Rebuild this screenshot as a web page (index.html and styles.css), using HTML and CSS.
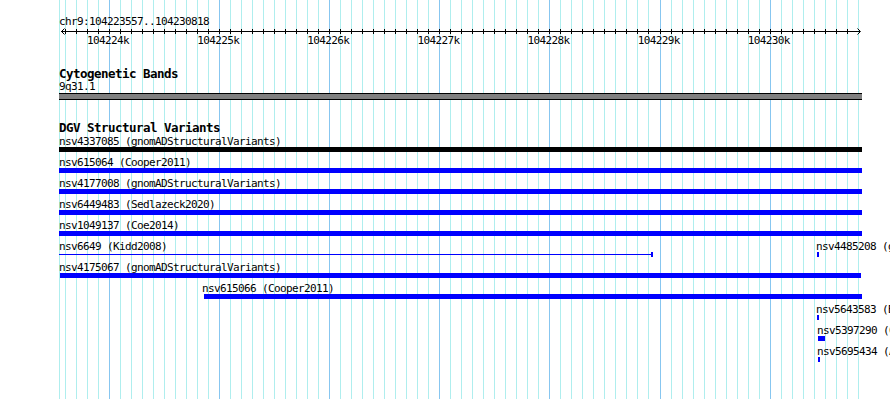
FILE: index.html
```html
<!DOCTYPE html>
<html>
<head>
<meta charset="utf-8">
<title>chr9:104223557..104230818</title>
<link rel="stylesheet" href="styles.css">
</head>
<body>
<div class="browser">
  <svg class="grid-lines" width="890" height="399" viewBox="0 0 890 399" shape-rendering="crispEdges">
    <path class="minor" d="M59.5 0V399M65.5 0V399M76.5 0V399M87.5 0V399M98.5 0V399M120.5 0V399M131.5 0V399M142.5 0V399M153.5 0V399M164.5 0V399M175.5 0V399M186.5 0V399M197.5 0V399M208.5 0V399M230.5 0V399M241.5 0V399M252.5 0V399M263.5 0V399M274.5 0V399M285.5 0V399M296.5 0V399M307.5 0V399M318.5 0V399M340.5 0V399M351.5 0V399M362.5 0V399M373.5 0V399M384.5 0V399M395.5 0V399M406.5 0V399M417.5 0V399M428.5 0V399M450.5 0V399M461.5 0V399M472.5 0V399M483.5 0V399M494.5 0V399M505.5 0V399M516.5 0V399M527.5 0V399M538.5 0V399M560.5 0V399M571.5 0V399M582.5 0V399M593.5 0V399M604.5 0V399M615.5 0V399M626.5 0V399M637.5 0V399M648.5 0V399M671.5 0V399M682.5 0V399M693.5 0V399M704.5 0V399M715.5 0V399M726.5 0V399M737.5 0V399M748.5 0V399M759.5 0V399M781.5 0V399M792.5 0V399M803.5 0V399M814.5 0V399M825.5 0V399M836.5 0V399M847.5 0V399M858.5 0V399"/>
    <path class="major" d="M109.5 0V399M219.5 0V399M329.5 0V399M439.5 0V399M549.5 0V399M660.5 0V399M770.5 0V399"/>
  </svg>

  <div class="tracks">
    <div class="lane locus">chr9:104223557..104230818</div>
    <svg class="scale" width="890" height="8" viewBox="0 0 890 8">
      <path class="axis" shape-rendering="crispEdges" d="M61 4.5H860"/>
      <path class="ticks" shape-rendering="crispEdges" d="M65.5 2v5M76.5 2v5M87.5 2v5M98.5 2v5M109.5 2v5M120.5 2v5M131.5 2v5M142.5 2v5M153.5 2v5M164.5 2v5M175.5 2v5M186.5 2v5M197.5 2v5M208.5 2v5M219.5 2v5M230.5 2v5M241.5 2v5M252.5 2v5M263.5 2v5M274.5 2v5M285.5 2v5M296.5 2v5M307.5 2v5M318.5 2v5M329.5 2v5M340.5 2v5M351.5 2v5M362.5 2v5M373.5 2v5M384.5 2v5M395.5 2v5M406.5 2v5M417.5 2v5M428.5 2v5M439.5 2v5M450.5 2v5M461.5 2v5M472.5 2v5M483.5 2v5M494.5 2v5M505.5 2v5M516.5 2v5M527.5 2v5M538.5 2v5M549.5 2v5M560.5 2v5M571.5 2v5M582.5 2v5M593.5 2v5M604.5 2v5M615.5 2v5M626.5 2v5M637.5 2v5M648.5 2v5M660.5 2v5M671.5 2v5M682.5 2v5M693.5 2v5M704.5 2v5M715.5 2v5M726.5 2v5M737.5 2v5M748.5 2v5M759.5 2v5M770.5 2v5M781.5 2v5M792.5 2v5M803.5 2v5M814.5 2v5M825.5 2v5M836.5 2v5M847.5 2v5"/>
      <polyline class="arrow" points="64.5,1.5 61.5,4.5 64.5,7.5"/>
      <polyline class="arrow" points="857.5,1.5 860.5,4.5 857.5,7.5"/>
    </svg>
    <div class="ticklabels">
      <span>104224k</span><span>104225k</span><span>104226k</span><span>104227k</span><span>104228k</span><span>104229k</span><span>104230k</span>
    </div>

    <section class="track">
      <h2 class="lane track-title">Cytogenetic Bands</h2>
      <div class="lane band-label">9q31.1</div>
      <div class="band"></div>
    </section>

    <section class="track">
      <h2 class="lane track-title">DGV Structural Variants</h2>
      <div class="rows">
        <div class="row">
          <div class="feature" style="margin-left:59px;width:803px">
            <span class="feature-label">nsv4337085 (gnomADStructuralVariants)</span>
            <div class="bar black" style="width:803px"></div>
          </div>
        </div>
        <div class="row">
          <div class="feature" style="margin-left:59px;width:803px">
            <span class="feature-label">nsv615064 (Cooper2011)</span>
            <div class="bar" style="width:803px"></div>
          </div>
        </div>
        <div class="row">
          <div class="feature" style="margin-left:59px;width:803px">
            <span class="feature-label">nsv4177008 (gnomADStructuralVariants)</span>
            <div class="bar" style="width:803px"></div>
          </div>
        </div>
        <div class="row">
          <div class="feature" style="margin-left:59px;width:803px">
            <span class="feature-label">nsv6449483 (Sedlazeck2020)</span>
            <div class="bar" style="width:803px"></div>
          </div>
        </div>
        <div class="row">
          <div class="feature" style="margin-left:59px;width:803px">
            <span class="feature-label">nsv1049137 (Coe2014)</span>
            <div class="bar" style="width:803px"></div>
          </div>
        </div>
        <div class="row">
          <div class="feature" style="margin-left:59px;width:594px">
            <span class="feature-label">nsv6649 (Kidd2008)</span>
            <div class="bar span" style="width:594px"><span class="connector"></span><span class="cap"></span></div>
          </div>
          <div class="feature" style="margin-left:163px;width:3px">
            <span class="feature-label">nsv4485208 (gnomADStructuralVariants)</span>
            <div class="bar" style="margin-left:1px;width:2px"></div>
          </div>
        </div>
        <div class="row">
          <div class="feature" style="margin-left:59px;width:802px">
            <span class="feature-label">nsv4175067 (gnomADStructuralVariants)</span>
            <div class="bar" style="margin-left:1px;width:801px"></div>
          </div>
        </div>
        <div class="row">
          <div class="feature" style="margin-left:202px;width:660px">
            <span class="feature-label">nsv615066 (Cooper2011)</span>
            <div class="bar" style="margin-left:2px;width:658px"></div>
          </div>
        </div>
        <div class="row">
          <div class="feature" style="margin-left:816px;width:3px">
            <span class="feature-label">nsv5643583 (Beyter2021)</span>
            <div class="bar" style="margin-left:1px;width:2px"></div>
          </div>
        </div>
        <div class="row">
          <div class="feature" style="margin-left:817px;width:8px">
            <span class="feature-label">nsv5397290 (Collins2017)</span>
            <div class="bar" style="margin-left:1px;width:7px"></div>
          </div>
        </div>
        <div class="row">
          <div class="feature" style="margin-left:817px;width:3px">
            <span class="feature-label">nsv5695434 (Abel2020)</span>
            <div class="bar" style="margin-left:1px;width:2px"></div>
          </div>
        </div>
      </div>
    </section>
  </div>
</div>
</body>
</html>
```

FILE: styles.css
```css
* {
  margin: 0;
  padding: 0;
  box-sizing: border-box;
}

html, body {
  background: #ffffff;
}

body {
  margin: 0;
  font-family: "DejaVu Sans Mono", "Liberation Mono", monospace;
  font-size: 11px;
  letter-spacing: -0.62px;
  color: #000000;
  overflow: hidden;
}

.browser {
  display: grid;
  width: 890px;
  height: 399px;
  overflow: hidden;
  background: #ffffff;
}

.grid-lines,
.tracks {
  grid-area: 1 / 1;
}

.grid-lines {
  display: block;
}

.grid-lines .minor {
  stroke: #afeeee;
  stroke-width: 1;
  fill: none;
}

.grid-lines .major {
  stroke: #87c6f0;
  stroke-width: 1;
  fill: none;
}

.tracks {
  display: flex;
  flex-direction: column;
  min-width: 0;
}

.lane {
  padding-left: 59px;
  white-space: nowrap;
}

.locus {
  padding-top: 16px;
  line-height: 11px;
}

.scale {
  display: block;
}

.scale .axis,
.scale .ticks,
.scale .arrow {
  stroke: #000000;
  stroke-width: 1;
  fill: none;
}

.ticklabels {
  display: grid;
  grid-template-columns: repeat(7, 110.139px);
  margin-left: 53px;
  line-height: 11px;
  text-align: center;
  white-space: nowrap;
}

.track {
  margin-top: 21px;
}

.track-title {
  font-size: 12.5px;
  letter-spacing: -0.525px;
  font-weight: bold;
  line-height: 14px;
}

.band-label {
  line-height: 11px;
}

.band {
  margin: 1px 0 0 59px;
  width: 803px;
  height: 7px;
  background: #808080;
  border-top: 1px solid #000000;
  border-bottom: 1px solid #000000;
}

.rows {
  margin-top: 1px;
  display: flex;
  flex-direction: column;
  gap: 5px;
}

.row {
  display: flex;
  height: 16px;
}

.feature {
  flex: none;
  display: flex;
  flex-direction: column;
  align-items: flex-start;
}

.feature-label {
  display: block;
  line-height: 11px;
  height: 11px;
  white-space: nowrap;
}

.bar {
  flex: none;
  height: 5px;
  background: #0000ff;
}

.bar.black {
  background: #000000;
}

.bar.span {
  display: flex;
  align-items: center;
  background: none;
}

.span .connector {
  flex: 1;
  height: 1px;
  background: #0000ff;
}

.span .cap {
  flex: none;
  width: 2px;
  height: 5px;
  background: #0000ff;
}
```
